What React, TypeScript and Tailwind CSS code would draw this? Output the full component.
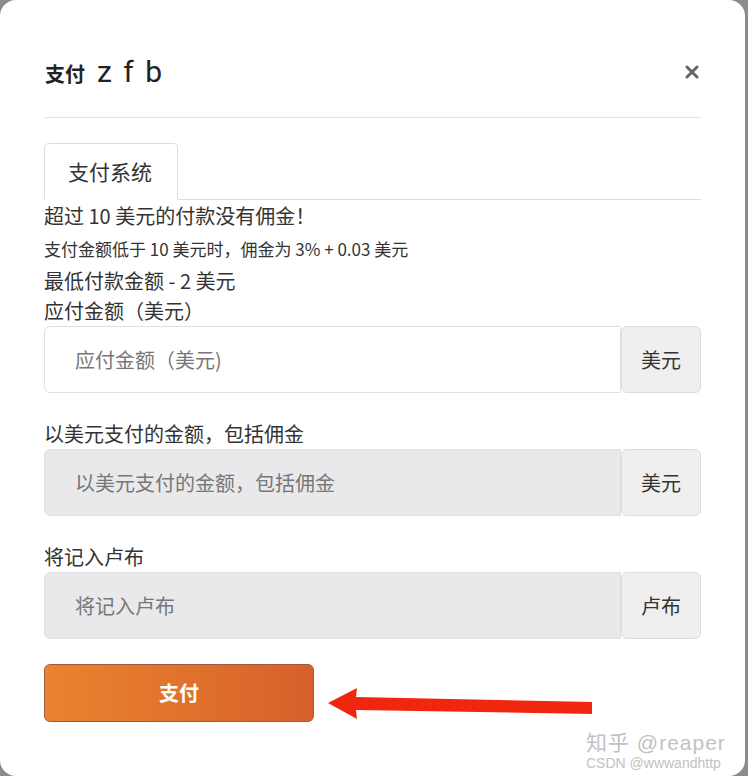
import React from 'react';

const cjk = "font-['Noto_Sans_CJK_SC','Noto_Sans',sans-serif]";

interface FieldProps {
  label: string;
  placeholder: string;
  unit: string;
  disabled?: boolean;
}

const Field: React.FC<FieldProps> = ({ label, placeholder, unit, disabled }) => (
  <div>
    <div className="h-[30px] flex items-center text-[20px] text-[#333]">{label}</div>
    <div className="flex h-[67px]">
      <input
        readOnly
        placeholder={placeholder}
        className={`flex-1 min-w-0 border border-[#e0e0e0] rounded-l-[6px] pl-[30px] text-[20px] outline-none placeholder:text-[#777] ${
          disabled ? 'bg-[#e9e9ec]' : 'bg-white'
        }`}
      />
      <div className="w-[80px] flex items-center justify-center bg-[#efefef] border border-[#dcdcdc] rounded-[6px] text-[20px] text-[#333]">
        {unit}
      </div>
    </div>
  </div>
);

const App: React.FC = () => {
  return (
    <div className={`relative w-[748px] h-[776px] bg-[#8c8c8c] overflow-hidden ${cjk}`}>
      <div className="w-[745px] h-full bg-white rounded-[16px] px-[44px]">
        {/* Header */}
        <div className="h-[118px] pt-[25px] flex items-center justify-between border-b border-[#e4e4e4]">
          <div className="flex items-baseline gap-[12px] pl-px">
            <span className="text-[20px] font-bold text-[#222]">支付</span>
            <span className="text-[30px] text-[#222] tracking-[2px] font-['Roboto',sans-serif]">z f b</span>
          </div>
          <svg width="14" height="14" viewBox="0 0 14 14" className="mr-[2px] mt-[2px]">
            <path d="M2 2 L12 12 M12 2 L2 12" stroke="#666" strokeWidth="3" strokeLinecap="round" />
          </svg>
        </div>

        {/* Tabs */}
        <div className="mt-[25px] flex border-b border-[#dedede]">
          <div className="-mb-px h-[57px] w-[134px] flex items-center pl-[23px] bg-white border border-[#dedede] border-b-white rounded-t-[5px] text-[21px] text-[#333]">
            支付系统
          </div>
        </div>

        {/* Info */}
        <div className="text-[#333]">
          <div className="h-[32px] flex items-center text-[20px]">超过 10 美元的付款没有佣金！</div>
          <div className="h-[34px] flex items-center text-[17px]">支付金额低于 10 美元时，佣金为 3% + 0.03 美元</div>
          <div className="h-[30px] flex items-center text-[20px]">最低付款金额 - 2 美元</div>
        </div>

        <div className="flex flex-col gap-[26px]">
          <Field label="应付金额（美元）" placeholder="应付金额（美元)" unit="美元" />
          <Field label="以美元支付的金额，包括佣金" placeholder="以美元支付的金额，包括佣金" unit="美元" disabled />
          <Field label="将记入卢布" placeholder="将记入卢布" unit="卢布" disabled />
        </div>

        <button className="mt-[25px] w-[270px] h-[58px] rounded-[6px] border border-[#9c5a45] bg-gradient-to-r from-[#e9842f] to-[#d8602b] text-white text-[20px] font-bold">
          支付
        </button>
      </div>

      {/* Red arrow annotation */}
      <svg className="absolute left-[320px] top-[684px]" width="280" height="40" viewBox="320 684 280 40">
        <polygon
          points="328,703 357,688 356,697 592,702 592,714 356,710 357,719"
          fill="#f0260f"
        />
      </svg>

      {/* Watermark */}
      <div className="absolute left-[586px] top-[732px] text-[#c2c2c2] font-['Liberation_Sans','Noto_Sans_CJK_SC',sans-serif]">
        <div className="text-[21px] leading-[21px] tracking-[1px] [text-shadow:0_0_2px_white]">知乎 @reaper</div>
        <div className="text-[14px] leading-[15px] mt-[3px] [text-shadow:0_0_2px_white]">CSDN @wwwandhttp</div>
      </div>
    </div>
  );
};

export default App;
